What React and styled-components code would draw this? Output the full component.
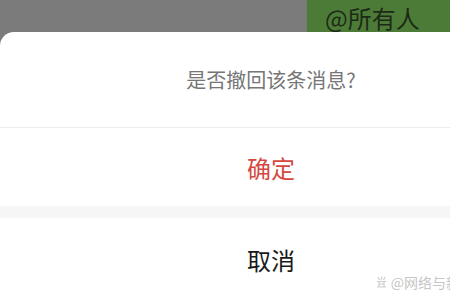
import styled, { createGlobalStyle } from "styled-components";

const Global = createGlobalStyle`
  html, body { margin: 0; padding: 0; background: #ffffff; }
  body {
    width: 450px;
    height: 300px;
    overflow: hidden;
    font-family: "Noto Sans CJK SC", "Noto Sans", sans-serif;
  }
`;

const Screen = styled.div`
  position: relative;
  width: 450px;
  height: 300px;
  display: flex;
  flex-direction: column;
  background: #7b7b7b;
  overflow: hidden;
`;

const ChatStrip = styled.div`
  height: 32px;
  display: flex;
  justify-content: flex-end;
`;

const Bubble = styled.div`
  width: 125px;
  padding-left: 18px;
  background: #4c7b37;
  color: #1c2a16;
  font-size: 24px;
  line-height: 36px;
  overflow: hidden;
  white-space: nowrap;
`;

const Sheet = styled.div`
  flex: 1;
  display: flex;
  flex-direction: column;
  background: #ffffff;
  border-top-left-radius: 14px;
`;

const Row = styled.div`
  height: ${(p) => p.$h}px;
  padding-left: 92px;
  padding-top: ${(p) => p.$pt || 0}px;
  box-sizing: border-box;
  display: flex;
  align-items: center;
  justify-content: center;
  font-size: ${(p) => p.$size}px;
  color: ${(p) => p.$color};
  border-bottom: ${(p) => (p.$line ? "1px solid #ececec" : "none")};
`;

const Gap = styled.div`
  height: 12px;
  background: #f6f6f6;
`;

const Watermark = styled.div`
  position: absolute;
  right: -10px;
  bottom: 8px;
  display: flex;
  align-items: center;
  gap: 4px;
  color: #c6c6c6;
  font-size: 14px;
  white-space: nowrap;
`;

export default function App() {
  return (
    <>
      <Global />
      <Screen>
        <ChatStrip>
          <Bubble>@所有人</Bubble>
        </ChatStrip>
        <Sheet>
          <Row $h={96} $size={20} $color="#767676" $line>
            是否撤回该条消息?
          </Row>
          <Row $h={78} $size={24} $color="#d5473f">
            确定
          </Row>
          <Gap />
          <Row $h={82} $size={24} $color="#1a1a1a">
            取消
          </Row>
        </Sheet>
        <Watermark>
          <svg width="11" height="12" viewBox="0 0 11 12" fill="none" stroke="#cfcfcf" strokeWidth="1.2">
            <path d="M2 1 L3.5 4 M6 0.5 L5 4 M9 1 L7.5 4" />
            <path d="M1 5.5 H10 M3 5.5 V11 M8 5.5 V11 M3 8 H8 M1 11 H10" />
          </svg>
          <span>@网络与新</span>
        </Watermark>
      </Screen>
    </>
  );
}
